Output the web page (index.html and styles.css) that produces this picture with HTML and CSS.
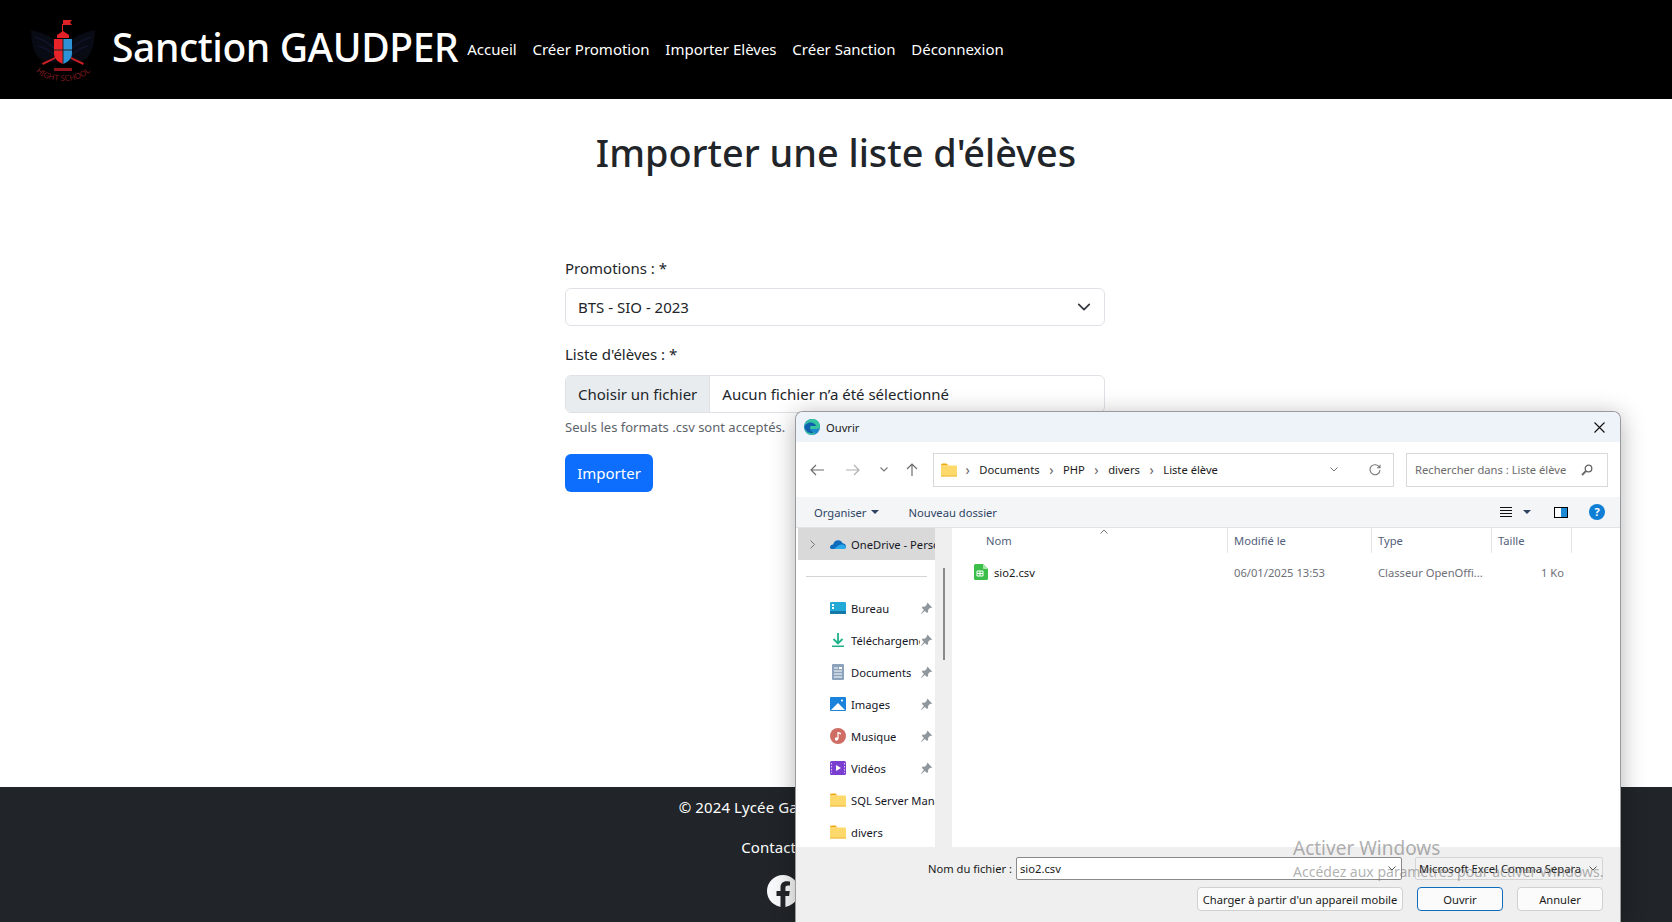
FILE: index.html
```html
<!DOCTYPE html>
<html lang="fr">
<head>
  <meta charset="UTF-8">
  <title>Importer une liste d'élèves</title>
  <link rel="stylesheet" href="styles.css">
</head>
<body>

<svg class="sprites" width="0" height="0">
  <symbol id="folder" viewBox="0 0 16 14">
    <path d="M0 2a1.500 1.500 0 0 1 1.500-1.500h4l2 2h-7.500z" fill="#f0a90f"/>
    <rect x="0" y="2.500" width="16" height="11" rx="1.200" fill="#fcd96a"/>
    <rect x="0" y="12.500" width="16" height="1" fill="#eeb93c"/>
  </symbol>
  <symbol id="pin" viewBox="0 0 12 12">
    <path d="M7 .8l4.200 4.200-1 .6-.8-.2-2 2 .1 1.800-1 1-2-2L1 11l-.2-.2 2.800-3.600-2-2 1-1 1.800.1 2-2-.2-.8z" fill="#8f979e"/>
  </symbol>
</svg>

<!-- === Header === -->
<header class="topbar">
  <svg class="logo" viewBox="0 0 66 66" aria-label="Logo">
    <path d="M28 24C20 15 8 13 1 11c0 10 2 22 8 28 5 4 11 5 17 4z" fill="#080a14"/>
    <path d="M38 24c8-9 20-11 27-13 0 10-2 22-8 28-5 4-11 5-17 4z" fill="#080a14"/>
    <path d="M5 18c6 2 14 6 20 12M8 27c5 1 11 4 17 9M61 18c-6 2-14 6-20 12M58 27c-5 1-11 4-17 9" stroke="#10142a" stroke-width="1.500" fill="none"/>
    <rect x="32" y="5" width="1" height="10" fill="#e02127"/>
    <path d="M33 1h9l-2 2.500 2 2.500h-9z" fill="#e02127"/>
    <path d="M27 16l6-4 6 4v3H27z" fill="#e02127"/>
    <path d="M24 20h9v25c-5-2-9-5-9-11z" fill="#e8242a"/>
    <path d="M33 20h9v14c0 6-4 9-9 11z" fill="#2d93d6"/>
    <path d="M33 20v25M24 31h18" stroke="#222" stroke-width="1"/>
    <path d="M12 44l13-6v2l-12 6zM54 44l-13-6v2l12 6z" fill="#c81e24"/>
    <path d="M24 49h18v3H24z" fill="#8c151a"/>
    <path id="arc" d="M4 50C14 66 52 66 62 50" fill="none"/>
    <text class="logo-text"><textPath href="#arc" startOffset="50%" text-anchor="middle">HIGHT SCHOOL</textPath></text>
  </svg>
  <span class="brand">Sanction GAUDPER</span>
  <nav class="nav">
    <a href="#">Accueil</a>
    <a href="#">Créer Promotion</a>
    <a href="#">Importer Elèves</a>
    <a href="#">Créer Sanction</a>
    <a href="#">Déconnexion</a>
  </nav>
</header>

<!-- === Formulaire === -->
<main class="content">
  <h1>Importer une liste d'élèves</h1>
  <form class="import-form">
    <label class="form-label">Promotions : *</label>
    <div class="form-select">
      <span>BTS - SIO - 2023</span>
      <svg width="14" height="14" viewBox="0 0 16 16"><path d="M2 5l6 6 6-6" fill="none" stroke="#343a40" stroke-width="2" stroke-linecap="round" stroke-linejoin="round"/></svg>
    </div>
    <label class="form-label second">Liste d'élèves : *</label>
    <div class="form-file">
      <span class="file-btn">Choisir un fichier</span>
      <span class="file-name">Aucun fichier n’a été sélectionné</span>
    </div>
    <div class="form-text">Seuls les formats .csv sont acceptés.</div>
    <button type="button" class="btn-primary">Importer</button>
  </form>
</main>

<!-- === Footer === -->
<footer class="footer">
  <p>© 2024 Lycée Gaudper. Tous droits réservés.</p>
  <p>Contact : infos@gaudper.fr</p>
  <div class="socials">
    <svg width="32" height="32" viewBox="0 0 32 32"><circle cx="16" cy="16" r="16" fill="#f8f9fa"/><path d="M13.500 32V21H9.500v-5h4v-3.500c0-4 2.400-6.200 6-6.200 1.700 0 3.500.3 3.500.3v3.900h-2c-2 0-2.600 1.200-2.600 2.500V16h4.400l-.7 5h-3.700v11z" fill="#212529"/></svg>
    <svg width="32" height="32" viewBox="0 0 32 32"><circle cx="16" cy="16" r="16" fill="#f8f9fa"/></svg>
    <svg width="32" height="32" viewBox="0 0 32 32"><circle cx="16" cy="16" r="16" fill="#f8f9fa"/></svg>
  </div>
</footer>

<!-- === Boite de dialogue Ouvrir === -->
<section class="dialog">
  <div class="dlg-title">
    <svg class="edge" width="16" height="16" viewBox="0 0 16 16">
      <circle cx="8" cy="8" r="8" fill="#1b86c9"/>
      <path d="M.5 6.500C2 1 7 0 8.500 0c3.500 0 7 2.500 7.500 7 .2 2-1.500 3-3.500 3h-6c0 2 2 3.700 5 3.300C9.500 16.300 6 16.300 4 15 1.500 13.500.2 10 .5 6.500z" fill="#35c3a0"/>
      <path d="M.5 8C1 5 4 3.500 6.500 3.500c3 0 5.500 2 5.500 3.500H6.500C5.500 9 6.500 13 10.500 13.500 6.500 15.500 1.500 13 .5 8z" fill="#0f5fae"/>
    </svg>
    <span>Ouvrir</span>
    <svg class="close" width="11" height="11" viewBox="0 0 11 11"><path d="M.5.500l10 10M10.500.500l-10 10" stroke="#111" stroke-width="1.100"/></svg>
  </div>

  <div class="dlg-nav">
    <svg class="nav-ico" width="14" height="12" viewBox="0 0 14 12"><path d="M14 6H1M6 1L1 6l5 5" fill="none" stroke="#6d6d6d" stroke-width="1.200"/></svg>
    <svg class="nav-ico fwd" width="14" height="12" viewBox="0 0 14 12"><path d="M0 6h13M8 1l5 5-5 5" fill="none" stroke="#b0b0b0" stroke-width="1.200"/></svg>
    <svg class="nav-ico down" width="8" height="5" viewBox="0 0 8 5"><path d="M.5.500L4 4 7.500.500" fill="none" stroke="#777" stroke-width="1.100"/></svg>
    <svg class="nav-ico up" width="12" height="13" viewBox="0 0 12 13"><path d="M6 13V1M1 6l5-5 5 5" fill="none" stroke="#6d6d6d" stroke-width="1.200"/></svg>
    <div class="address">
      <svg class="addr-folder" width="16" height="14"><use href="#folder"/></svg>
      <span class="crumb-sep">›</span><span>Documents</span>
      <span class="crumb-sep">›</span><span>PHP</span>
      <span class="crumb-sep">›</span><span>divers</span>
      <span class="crumb-sep">›</span><span>Liste élève</span>
      <svg class="addr-down" width="8" height="5" viewBox="0 0 8 5"><path d="M.5.500L4 4 7.500.500" fill="none" stroke="#777" stroke-width="1"/></svg>
      <svg class="addr-refresh" width="12" height="12" viewBox="0 0 12 12"><path d="M10.500 3.500A5 5 0 1 0 11 6M11 .8v3H8" fill="none" stroke="#777" stroke-width="1.100"/></svg>
    </div>
    <div class="search">
      <span>Rechercher dans : Liste élève</span>
      <svg width="12" height="12" viewBox="0 0 12 12"><circle cx="7.500" cy="4.500" r="3.300" fill="none" stroke="#666" stroke-width="1.300"/><path d="M5 7l-4 4" stroke="#666" stroke-width="1.800"/></svg>
    </div>
  </div>

  <div class="dlg-commands">
    <span class="cmd">Organiser<i class="caret"></i></span>
    <span class="cmd new-folder">Nouveau dossier</span>
    <div class="cmd-right">
      <svg class="view" width="12" height="10" viewBox="0 0 12 10"><path d="M0 .5h12M0 3.500h12M0 6.500h12M0 9.500h12" stroke="#111"/></svg>
      <i class="caret dark"></i>
      <span class="pane"></span>
      <span class="help">?</span>
    </div>
  </div>

  <div class="dlg-body">
    <aside class="side">
      <div class="side-row selected">
        <svg class="side-chev" width="5" height="9" viewBox="0 0 5 9"><path d="M.5.500l4 4-4 4" fill="none" stroke="#777"/></svg>
        <svg class="side-ico" width="16" height="16" viewBox="0 0 16 16"><path d="M0 11.500C0 9.500 1.500 8.500 3 8.500 4 5.500 6 4 8.500 4.200c2 .1 3.500 1.300 4 3 2 0 3.500 1.500 3.500 3.300 0 1.500-1 2.500-2.500 2.500H2c-1.200 0-2-.7-2-1.500z" fill="#0f6cbd"/><path d="M4 13l5-4c2-1 5-1 7 1.500 0 1.500-1 2.500-2.500 2.500z" fill="#29a8ea"/></svg>
        <span class="side-label">OneDrive - Personnel</span>
      </div>
      <div class="side-divider"></div>
      <div class="side-row">
        <svg class="side-ico" width="16" height="16" viewBox="0 0 16 16"><rect y="2" width="16" height="12" rx="1" fill="#22a9d6"/><rect y="11" width="16" height="3" fill="#1479a8"/><rect x="2" y="4" width="2" height="2" fill="#fff"/><rect x="2" y="7" width="2" height="2" fill="#fff"/></svg>
        <span class="side-label">Bureau</span>
        <svg class="pin" width="13" height="13"><use href="#pin"/></svg>
      </div>
      <div class="side-row">
        <svg class="side-ico" width="16" height="16" viewBox="0 0 16 16"><path d="M8 1v10M3.500 7L8 11.500 12.500 7" fill="none" stroke="#1eb28c" stroke-width="1.800"/><rect x="2" y="13.500" width="12" height="1.500" fill="#1eb28c"/></svg>
        <span class="side-label short">Téléchargements</span>
        <svg class="pin" width="13" height="13"><use href="#pin"/></svg>
      </div>
      <div class="side-row">
        <svg class="side-ico" width="16" height="16" viewBox="0 0 16 16"><rect x="2" y="0" width="12" height="16" rx="1" fill="#8da3bd"/><path d="M4 4h4M4 7h8M4 10h8M4 13h8" stroke="#fff"/><rect x="9" y="3" width="3" height="2" fill="#fff"/></svg>
        <span class="side-label">Documents</span>
        <svg class="pin" width="13" height="13"><use href="#pin"/></svg>
      </div>
      <div class="side-row">
        <svg class="side-ico" width="16" height="16" viewBox="0 0 16 16"><rect y="1" width="16" height="14" rx="1" fill="#1a83dc"/><path d="M1 14l7-7 7 7z" fill="#fff"/><circle cx="12" cy="4.500" r="1" fill="#fff"/></svg>
        <span class="side-label">Images</span>
        <svg class="pin" width="13" height="13"><use href="#pin"/></svg>
      </div>
      <div class="side-row">
        <svg class="side-ico" width="16" height="16" viewBox="0 0 16 16"><circle cx="8" cy="8" r="8" fill="#cf6d64"/><path d="M8 4v7" stroke="#fff" stroke-width="1.200"/><circle cx="6.500" cy="11" r="1.700" fill="#fff"/><path d="M8 4l3 1v1.500L8 5.500z" fill="#fff"/></svg>
        <span class="side-label">Musique</span>
        <svg class="pin" width="13" height="13"><use href="#pin"/></svg>
      </div>
      <div class="side-row">
        <svg class="side-ico" width="16" height="16" viewBox="0 0 16 16"><rect y="1" width="16" height="14" rx="1.500" fill="#7a3fd1"/><path d="M6 5l5 3-5 3z" fill="#fff"/><path d="M1.500 3v10M14.500 3v10" stroke="#d9c6f5" stroke-dasharray="1.500 1.500"/></svg>
        <span class="side-label">Vidéos</span>
        <svg class="pin" width="13" height="13"><use href="#pin"/></svg>
      </div>
      <div class="side-row">
        <svg class="side-ico" width="16" height="14"><use href="#folder"/></svg>
        <span class="side-label">SQL Server Management</span>
      </div>
      <div class="side-row">
        <svg class="side-ico" width="16" height="14"><use href="#folder"/></svg>
        <span class="side-label">divers</span>
      </div>
    </aside>
    <div class="side-scroll"><span class="thumb"></span></div>

    <div class="files">
      <svg class="sort-caret" width="8" height="5" viewBox="0 0 8 5"><path d="M.5 4.500L4 1l3.500 3.500" fill="none" stroke="#777"/></svg>
      <div class="file-head">
        <span class="col col-name">Nom</span>
        <span class="col col-date">Modifié le</span>
        <span class="col col-type">Type</span>
        <span class="col col-size">Taille</span>
      </div>
      <div class="file-row">
        <span class="col col-name">
          <svg width="14" height="16" viewBox="0 0 14 16"><path d="M1.500 0H9l5 5v9.500a1.500 1.500 0 0 1-1.500 1.500h-11A1.500 1.500 0 0 1 0 14.500v-13A1.500 1.500 0 0 1 1.500 0z" fill="#3cbf4a"/><path d="M9 0l5 5H9z" fill="#a5e5a9"/><path d="M3 7h6v5H3zM6 7v5M3 9.500h6" fill="none" stroke="#fff"/></svg>
          <span class="fname">sio2.csv</span>
        </span>
        <span class="col col-date">06/01/2025 13:53</span>
        <span class="col col-type">Classeur OpenOffi...</span>
        <span class="col col-size">1 Ko</span>
      </div>
    </div>
  </div>

  <div class="dlg-bottom">
    <div class="dlg-line">
      <span class="field-label">Nom du fichier :</span>
      <div class="name-input">sio2.csv<svg width="8" height="5" viewBox="0 0 8 5"><path d="M.5.500L4 4 7.500.500" fill="none" stroke="#555"/></svg></div>
      <div class="type-select">Microsoft Excel Comma Separa<svg width="8" height="5" viewBox="0 0 8 5"><path d="M.5.500L4 4 7.500.500" fill="none" stroke="#555"/></svg></div>
    </div>
    <div class="dlg-line buttons">
      <button type="button" class="dlg-btn mobile">Charger à partir d'un appareil mobile</button>
      <button type="button" class="dlg-btn open">Ouvrir</button>
      <button type="button" class="dlg-btn">Annuler</button>
    </div>
  </div>
</section>

<!-- === Filigrane Windows === -->
<div class="watermark">
  <div class="wm-title">Activer Windows</div>
  <div class="wm-sub">Accédez aux paramètres pour activer Windows.</div>
</div>

</body>
</html>
```

FILE: styles.css
```css
/* ===== Global Styles ===== */
* {
  margin: 0;
  padding: 0;
  box-sizing: border-box;
}
html, body {
  height: 922px;
  overflow: hidden;
}
body {
  position: relative;
  display: flex;
  flex-direction: column;
  font-family: "Noto Sans", "Open Sans", sans-serif;
  font-size: 16px;
  color: #212529;
  background: #fff;
}
.sprites {
  position: absolute;
}

/* ===== Header ===== */
.topbar {
  height: 99px;
  flex: none;
  display: flex;
  align-items: center;
  padding: 0 0 0 30px;
  background: #000;
  color: #fff;
}
.logo {
  width: 66px;
  height: 66px;
  margin: 4px 16px 0 0;
}
.logo-text {
  font-size: 8px;
  fill: #7f1a20;
}
.brand {
  margin-bottom: 6px;
  font-size: 39px;
  font-weight: 500;
  letter-spacing: -0.4px;
  white-space: nowrap;
}
.nav {
  display: flex;
  gap: 15.75px;
  margin-left: 9px;
  padding-bottom: 2px;
}
.nav a {
  color: #fff;
  font-size: 15px;
  text-decoration: none;
}

/* ===== Form ===== */
.content {
  height: 688px;
  flex: none;
  padding-top: 30px;
}
h1 {
  font-size: 37.8px;
  font-weight: 500;
  line-height: 48px;
  text-align: center;
}
.import-form {
  width: 540px;
  margin: 79px 0 0 565px;
}
.form-label {
  display: block;
  font-size: 15px;
  line-height: 24px;
  margin-bottom: 8px;
}
.form-label.second {
  margin-top: 16px;
  margin-bottom: 9px;
}
.form-select {
  height: 38px;
  display: flex;
  align-items: center;
  justify-content: space-between;
  padding: 0 13px 0 12px;
  font-size: 15px;
  border: 1px solid #dee2e6;
  border-radius: 6px;
}
.form-file {
  height: 38px;
  display: flex;
  font-size: 15px;
  border: 1px solid #dee2e6;
  border-radius: 6px;
  overflow: hidden;
}
.file-btn {
  display: flex;
  align-items: center;
  padding: 0 12px;
  background: #e9ecef;
  border-right: 1px solid #dee2e6;
}
.file-name {
  display: flex;
  align-items: center;
  padding-left: 12px;
}
.form-text {
  margin-top: 4px;
  font-size: 13px;
  line-height: 21px;
  color: #5c636a;
}
.btn-primary {
  display: block;
  width: 88px;
  height: 38px;
  margin-top: 16px;
  font: inherit;
  font-size: 15px;
  color: #fff;
  background: #0d6efd;
  border: none;
  border-radius: 6px;
}

/* ===== Footer ===== */
.footer {
  flex: 1;
  padding-top: 8px;
  background: #212529;
  color: #fff;
  text-align: center;
  font-size: 15px;
  letter-spacing: 0.1px;
}
.footer p {
  line-height: 24px;
  margin-bottom: 16px;
}
.socials {
  display: flex;
  justify-content: center;
  gap: 21px;
}

/* ===== Dialog ===== */
.dialog {
  position: absolute;
  left: 795px;
  top: 411px;
  width: 826px;
  height: 511px;
  display: flex;
  flex-direction: column;
  background: #fff;
  border: 1px solid #9a9a9a;
  border-bottom: none;
  border-radius: 8px 8px 0 0;
  box-shadow: 0 4px 24px rgba(0, 0, 0, 0.3);
  font-size: 11.2px;
  color: #1a1a1a;
  overflow: hidden;
}
.dlg-title {
  height: 30px;
  flex: none;
  display: flex;
  align-items: center;
  padding: 0 15px 0 8px;
  background: #edf3f8;
}
.edge {
  margin-right: 6px;
}
.close {
  margin-left: auto;
}
.dlg-nav {
  height: 55px;
  flex: none;
  display: flex;
  align-items: center;
  padding-left: 14px;
  background: #fff;
}
.nav-ico {
  flex: none;
}
.nav-ico.fwd {
  margin-left: 22px;
}
.nav-ico.down {
  margin-left: 20px;
}
.nav-ico.up {
  margin-left: 18px;
}
.address {
  width: 461px;
  height: 34px;
  margin-left: 15px;
  display: flex;
  align-items: center;
  padding-left: 7px;
  border: 1px solid #d9d9d9;
}
.addr-folder {
  margin-right: -1px;
}
.crumb-sep {
  margin: 0 9.5px;
  color: #666;
  font-size: 14px;
  line-height: 14px;
}
.addr-down {
  margin-left: auto;
}
.addr-refresh {
  margin: 0 12px 0 31px;
}
.search {
  width: 202px;
  height: 34px;
  margin-left: 12px;
  display: flex;
  align-items: center;
  justify-content: space-between;
  padding: 0 14px 0 8px;
  border: 1px solid #d9d9d9;
  color: #6b6b6b;
  white-space: nowrap;
}
.dlg-commands {
  height: 31px;
  flex: none;
  display: flex;
  align-items: center;
  padding-left: 18px;
  background: #f3f5f7;
  border-bottom: 1px solid #e3e3e3;
  color: #2f4463;
}
.cmd {
  display: flex;
  align-items: center;
}
.new-folder {
  margin-left: 30px;
}
.caret {
  width: 0;
  height: 0;
  margin-left: 4px;
  border-left: 4px solid transparent;
  border-right: 4px solid transparent;
  border-top: 4px solid #2f4463;
}
.caret.dark {
  margin: 0 0 0 11px;
}
.cmd-right {
  margin-left: auto;
  display: flex;
  align-items: center;
  padding-right: 15px;
}
.pane {
  width: 14px;
  height: 11px;
  margin-left: 23px;
  border: 1px solid #000;
  background: linear-gradient(to right, #fff 50%, #1d8ad6 50%);
}
.help {
  width: 16px;
  height: 16px;
  margin-left: 21px;
  border-radius: 50%;
  background: #0f7fd6;
  color: #fff;
  font-size: 11px;
  font-weight: 700;
  line-height: 16px;
  text-align: center;
}
.dlg-body {
  flex: 1;
  min-height: 0;
  display: flex;
}
.side {
  width: 139px;
  flex: none;
  padding-left: 2px;
  overflow: hidden;
}
.side-row {
  height: 32px;
  display: flex;
  align-items: center;
  padding-left: 32px;
  position: relative;
  white-space: nowrap;
}
.side-row.selected {
  background: #d9d9d9;
  margin-bottom: 16px;
}
.side-chev {
  position: absolute;
  left: 12px;
}
.side-ico {
  flex: none;
  margin-right: 5px;
}
.side-label {
  overflow: hidden;
  color: #16161f;
}
.side-label.short {
  max-width: 69px;
}
.pin {
  position: absolute;
  left: 122px;
}
.side-divider {
  height: 1px;
  margin: 0 8px 15px;
  background: #d4d4d4;
}
.side-scroll {
  width: 17px;
  flex: none;
  padding: 40px 0 0 8px;
  background: #efefef;
}
.thumb {
  display: block;
  width: 2px;
  height: 92px;
  background: #8a8a8a;
}
.files {
  position: relative;
  flex: 1;
}
.sort-caret {
  position: absolute;
  left: 148px;
  top: 1px;
}
.file-head {
  height: 25px;
  display: grid;
  grid-template-columns: 276px 144px 120px 80px;
  color: #52607a;
}
.file-head .col {
  display: flex;
  align-items: center;
  padding-left: 6px;
  border-right: 1px solid #e5e5e5;
}
.file-head .col-name {
  padding-left: 34px;
}
.file-row {
  height: 38px;
  display: grid;
  grid-template-columns: 276px 144px 120px 72px;
  align-items: center;
  color: #6e6f78;
}
.file-row .col {
  padding-left: 6px;
}
.file-row .col-name {
  display: flex;
  align-items: center;
  padding-left: 22px;
}
.file-row .col-size {
  text-align: right;
}
.fname {
  margin-left: 6px;
  color: #1a1a1a;
}
.dlg-bottom {
  height: 75px;
  flex: none;
  padding: 10px 17px 0 0;
  background: #efefef;
}
.dlg-line {
  display: flex;
  align-items: center;
  justify-content: flex-end;
}
.dlg-line.buttons {
  margin-top: 7px;
}
.field-label {
  margin-right: 4px;
}
.name-input, .type-select {
  height: 23px;
  display: flex;
  align-items: center;
  justify-content: space-between;
  padding: 0 5px 0 3px;
  background: #fff;
  border: 1px solid #d4d4d4;
  border-radius: 2px;
  white-space: nowrap;
}
.name-input {
  width: 386px;
  border-color: #8a8a8a;
}
.type-select {
  width: 188px;
  margin-left: 13px;
  background: #f2f2f2;
}
.dlg-btn {
  width: 86px;
  height: 24px;
  margin-left: 14px;
  font: inherit;
  color: #1a1a1a;
  background: #fbfbfb;
  border: 1px solid #d0d0d0;
  border-radius: 4px;
}
.dlg-btn.mobile {
  width: 206px;
  margin-left: 0;
  white-space: nowrap;
}
.dlg-btn.open {
  border: 1px solid #0f6cbd;
}

/* ===== Watermark ===== */
.watermark {
  position: absolute;
  left: 1293px;
  top: 834px;
  color: rgba(110, 110, 110, 0.55);
  white-space: nowrap;
  pointer-events: none;
}
.wm-title {
  font-size: 19px;
  line-height: 28px;
}
.wm-sub {
  font-size: 14px;
  line-height: 20px;
}
```
